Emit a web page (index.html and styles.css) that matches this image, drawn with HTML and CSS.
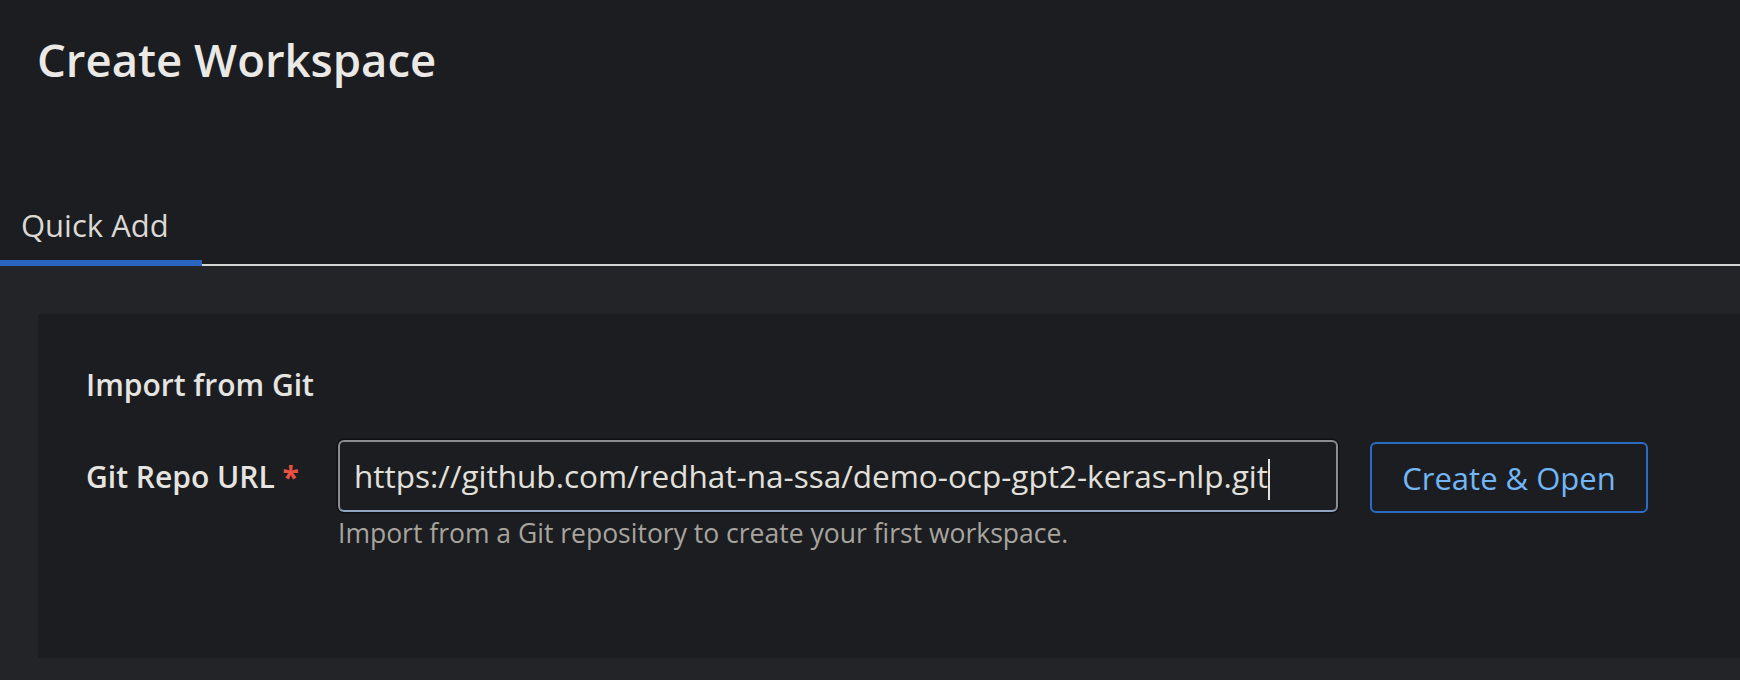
FILE: index.html
```html
<!DOCTYPE html>
<html lang="en">
<head>
<meta charset="utf-8">
<title>Create Workspace</title>
<link rel="stylesheet" href="styles.css">
</head>
<body>
<div class="app">
  <header class="page-header">
    <h1 class="page-title">Create Workspace</h1>
  </header>
  <nav class="tabs">
    <div class="tab tab-active">Quick Add</div>
    <div class="tab-rest"></div>
  </nav>
  <main class="main">
    <section class="card">
      <h2 class="card-title">Import from Git</h2>
      <div class="form-row">
        <label class="form-label">Git Repo URL <span class="required">*</span></label>
        <div class="field">
          <div class="text-input">https://github.com/redhat-na-ssa/demo-ocp-gpt2-keras-nlp.git<span class="caret"></span></div>
          <div class="helper">Import from a Git repository to create your first workspace.</div>
        </div>
        <button class="btn-secondary" type="button">Create &amp; Open</button>
      </div>
    </section>
  </main>
</div>
</body>
</html>
```

FILE: styles.css
```css
* { box-sizing: border-box; }

html, body {
  margin: 0;
  padding: 0;
  background: #1b1d21;
  height: 100%;
}

.app {
  display: flex;
  flex-direction: column;
  height: 680px;
  overflow: hidden;
  font-family: "Open Sans", "Liberation Sans", sans-serif;
}

.page-header {
  padding: 34px 0 0 37px;
  height: 205px;
}

.page-title {
  margin: 0;
  font-family: "Open Sans", "Liberation Sans", sans-serif;
  font-weight: 600;
  font-size: 45.5px;
  line-height: 50px;
  color: #ebe9e6;
}

.tabs {
  display: flex;
  align-items: flex-end;
}

.tab {
  width: 202px;
  padding: 0 0 15px 21px;
  font-size: 31px;
  line-height: 40px;
  color: #dcd9d4;
  border-bottom: 6px solid #2a65c2;
}

.tab-rest {
  flex: 1;
  border-bottom: 2px solid #d4d4d4;
}

.main {
  flex: 1;
  background: #222427;
  padding: 48px 0 0 38px;
}

.card {
  height: 344px;
  background: #1b1d21;
  padding: 53px 0 0 48px;
}

.card-title {
  margin: 0 0 37px 0;
  font-weight: 600;
  font-size: 30px;
  line-height: 36px;
  color: #e6e4e0;
}

.form-row {
  display: grid;
  grid-template-columns: 252px 1000px 310px;
  align-items: start;
}

.form-label {
  padding-top: 19px;
  font-weight: 600;
  font-size: 30px;
  line-height: 36px;
  color: #e6e4e0;
}

.required {
  color: #e9503f;
  font-weight: 700;
}

.field {
  display: flex;
  flex-direction: column;
}

.text-input {
  height: 72px;
  display: flex;
  align-items: center;
  padding-left: 14px;
  border: 2px solid #8b8c8e;
  border-bottom-color: #8ea4c2;
  border-radius: 6px;
  box-shadow: 0 0 0 1.5px #0f1012;
  background: #1b1d21;
  font-size: 31.5px;
  line-height: 40px;
  color: #e2e0dc;
  white-space: nowrap;
}

.caret {
  display: inline-block;
  width: 2px;
  height: 41px;
  background: #e2e0dc;
  position: relative;
  top: 3px;
}

.helper {
  margin-top: 5px;
  font-size: 26.5px;
  line-height: 32px;
  color: #a8a49e;
}

.btn-secondary {
  margin: 2px 0 0 32px;
  width: 278px;
  height: 71px;
  background: transparent;
  border: 2px solid #2d6bc4;
  border-radius: 6px;
  font-family: "Open Sans", "Liberation Sans", sans-serif;
  font-size: 31px;
  line-height: 40px;
  color: #73b6f5;
  padding: 0;
}
```
